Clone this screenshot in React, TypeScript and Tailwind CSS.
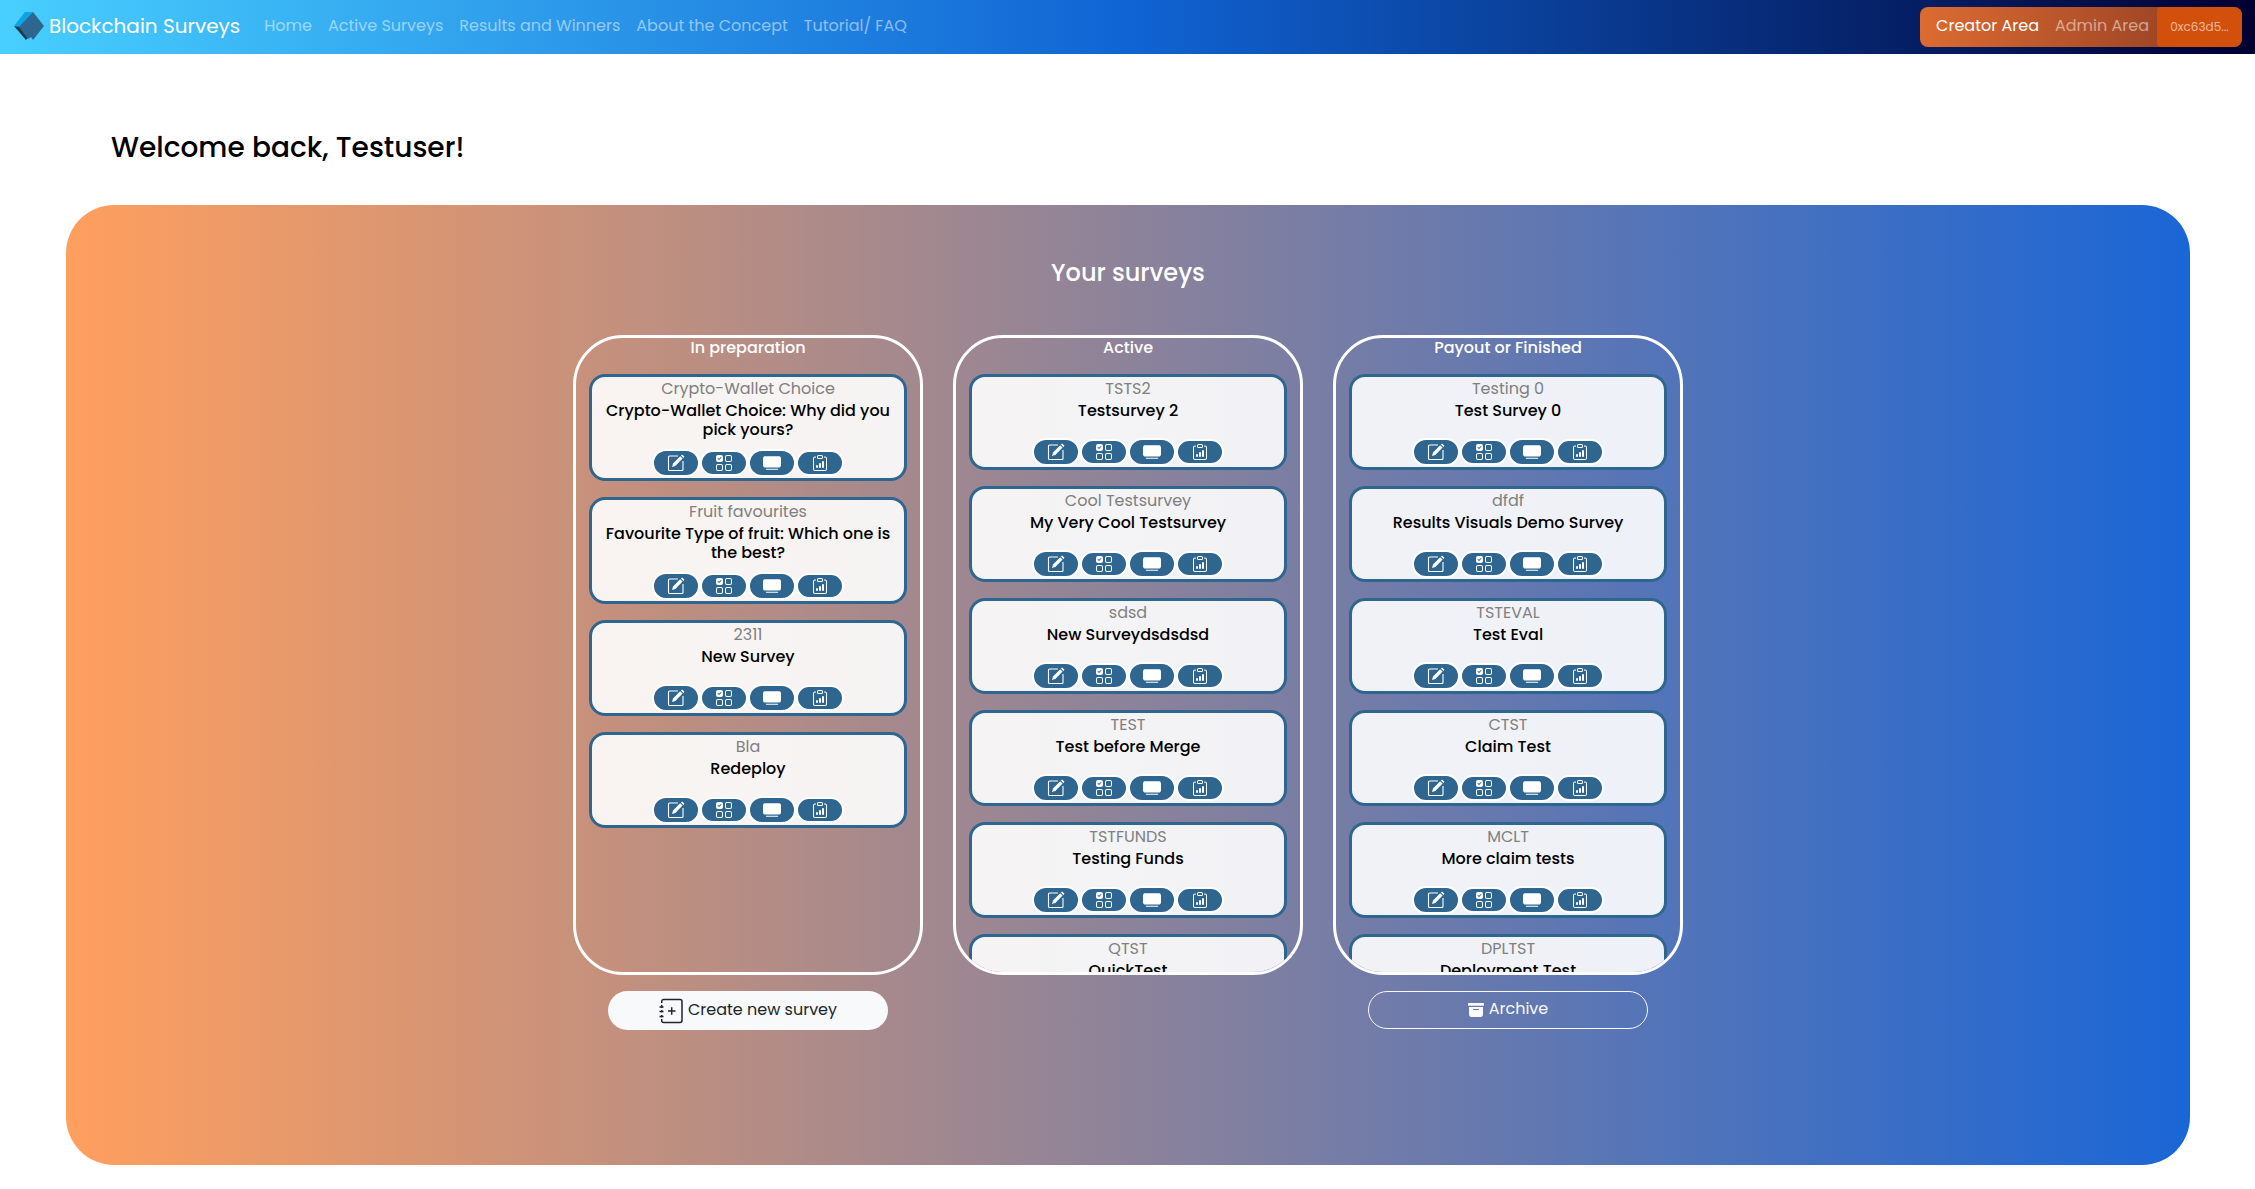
import { BsArchiveFill, BsClipboardData, BsTvFill, BsUiChecksGrid } from 'react-icons/bs';

type Survey = { code: string; title: string };

const preparation: Survey[] = [
  { code: 'Crypto-Wallet Choice', title: 'Crypto-Wallet Choice: Why did you pick yours?' },
  { code: 'Fruit favourites', title: 'Favourite Type of fruit: Which one is the best?' },
  { code: '2311', title: 'New Survey' },
  { code: 'Bla', title: 'Redeploy' },
];

const active: Survey[] = [
  { code: 'TSTS2', title: 'Testsurvey 2' },
  { code: 'Cool Testsurvey', title: 'My Very Cool Testsurvey' },
  { code: 'sdsd', title: 'New Surveydsdsdsd' },
  { code: 'TEST', title: 'Test before Merge' },
  { code: 'TSTFUNDS', title: 'Testing Funds' },
  { code: 'QTST', title: 'QuickTest' },
];

const finished: Survey[] = [
  { code: 'Testing 0', title: 'Test Survey 0' },
  { code: 'dfdf', title: 'Results Visuals Demo Survey' },
  { code: 'TSTEVAL', title: 'Test Eval' },
  { code: 'CTST', title: 'Claim Test' },
  { code: 'MCLT', title: 'More claim tests' },
  { code: 'DPLTST', title: 'Deployment Test' },
];

const links = ['Home', 'Active Surveys', 'Results and Winners', 'About the Concept', 'Tutorial/ FAQ'];

function Logo() {
  return (
    <svg viewBox="0 0 30 30" className="size-[30px]" aria-hidden="true">
      <path d="M11 1 L19 1 L6 16 L0 15 Z" fill="#0aa5e2" />
      <path d="M0 15 L6 16 L15 26 L12 29 Z" fill="#173a52" />
      <path d="M19 1 L30 15 L19 29 L17 26 L14 28 L5 16 Z" fill="#2f6690" />
    </svg>
  );
}

function EditIcon() {
  return (
    <svg viewBox="0 0 18 18" className="size-[18px]" fill="none" aria-hidden="true">
      <path d="M11 2H2.5a1 1 0 0 0-1 1v12.5a1 1 0 0 0 1 1H15a1 1 0 0 0 1-1V7" stroke="currentColor" strokeWidth="1.1" />
      <path d="M5 13l1-3.4 7.2-7.4 2.4 2.4-7.3 7.3zM14 1.5l1.1-1.1 2.4 2.4-1.1 1.1z" fill="currentColor" />
    </svg>
  );
}

function JournalPlusIcon() {
  return (
    <svg viewBox="0 0 24 26" className="h-[26px] w-6" fill="none" stroke="currentColor" strokeWidth="1.5" aria-hidden="true">
      <path d="M2.7 5V3.5a2 2 0 0 1 2-2H21a2 2 0 0 1 2 2v19a2 2 0 0 1-2 2H4.700a2 2 0 0 1-2-2V21" />
      <path d="M0.500 9h4M0.500 13.500h4M0.500 18.500h4M2.700 7v3M2.700 12v2.500M2.700 17v2.500M9 13h7.500M12.700 9.300v7.500" />
    </svg>
  );
}

const small = 'flex h-[26px] w-12 items-center justify-center rounded-full border-2 border-white bg-[#2f6690] text-white';
const tall = 'flex h-7 w-12 items-center justify-center rounded-full border-2 border-white bg-[#2f6690] text-white';

function Card({ code, title }: Survey) {
  return (
    <li className="flex shrink-0 flex-col items-center rounded-2xl border-3 border-[#2f6690] bg-white/90 text-center">
      <p className="leading-6 text-[#808080]">{code}</p>
      <h4 className="min-h-[27px] px-2 leading-[19px] font-medium text-black">{title}</h4>
      <div className="mt-[10px] mb-px flex h-7 items-center">
        <button type="button" aria-label={`Edit ${title}`} className={tall}><EditIcon /></button>
        <button type="button" aria-label={`Questions of ${title}`} className={small}><BsUiChecksGrid className="size-4" /></button>
        <button type="button" aria-label={`Preview ${title}`} className={tall}><BsTvFill className="size-[18px]" /></button>
        <button type="button" aria-label={`Results of ${title}`} className={small}><BsClipboardData className="size-4" /></button>
      </div>
    </li>
  );
}

function Column({ heading, surveys }: { heading: string; surveys: Survey[] }) {
  return (
    <section className="h-[640px] overflow-hidden rounded-[50px] border-3 border-white px-[13px]">
      <h3 className="h-9 text-center leading-[19px] font-medium text-white">{heading}</h3>
      <ul className="flex flex-col gap-4">
        {surveys.map((s) => <Card key={s.code} {...s} />)}
      </ul>
    </section>
  );
}

export default function App() {
  return (
    <div className="min-h-screen bg-white pb-6 font-[Poppins,Inter,sans-serif] text-base">
      <header className="flex h-[54px] items-center justify-between bg-[linear-gradient(90deg,#48cfff_0%,#1064d4_50%,#000032_100%)] pr-[13px] pl-[14px]">
        <div className="flex items-center pb-0.5">
          <a href="#" className="flex items-center gap-[5px] text-xl text-white"><Logo />Blockchain Surveys</a>
          <nav className="ml-4 flex text-white/50">
            {links.map((l) => <a key={l} href="#" className="px-2">{l}</a>)}
          </nav>
        </div>
        <nav className="flex h-10 items-center overflow-hidden rounded-lg bg-[linear-gradient(90deg,#dd6b31,#8b3a22)] pl-2 leading-[22px]">
          <a href="#" className="px-2 pb-0.5 text-white">Creator Area</a>
          <a href="#" className="px-2 pb-0.5 text-white/50">Admin Area</a>
          <button type="button" className="h-10 w-[85px] rounded bg-[#d2500c] text-xs text-white/60">0xc63d5...</button>
        </nav>
      </header>
      <main className="pr-[65px] pl-[66px]">
        <h1 className="pt-[73px] pl-[45px] text-[28px] leading-[42px] font-medium text-black">Welcome back, Testuser!</h1>
        <div className="mt-9 flex h-[960px] flex-col items-center rounded-[48px] bg-linear-to-r/srgb from-[#ff9f5e] to-[#1a66d6] pt-[52px]">
          <h2 className="text-2xl leading-8 font-medium text-white">Your surveys</h2>
          <div className="mt-[46px] grid grid-cols-[repeat(3,350px)] gap-x-[30px] gap-y-4">
            <Column heading="In preparation" surveys={preparation} />
            <Column heading="Active" surveys={active} />
            <Column heading="Payout or Finished" surveys={finished} />
            <button type="button" className="flex h-[39px] w-[280px] items-center justify-center gap-[5px] justify-self-center rounded-full bg-[#f8f9fa] text-[#212529]"><JournalPlusIcon /><span className="pb-0.5">Create new survey</span></button>
            <button type="button" className="col-start-3 flex h-[38px] w-[280px] items-center justify-center gap-[5px] justify-self-center rounded-full border border-[#f8f9fa] text-[#f8f9fa]"><BsArchiveFill className="size-4" /><span className="pb-0.5">Archive</span></button>
          </div>
        </div>
      </main>
    </div>
  );
}
